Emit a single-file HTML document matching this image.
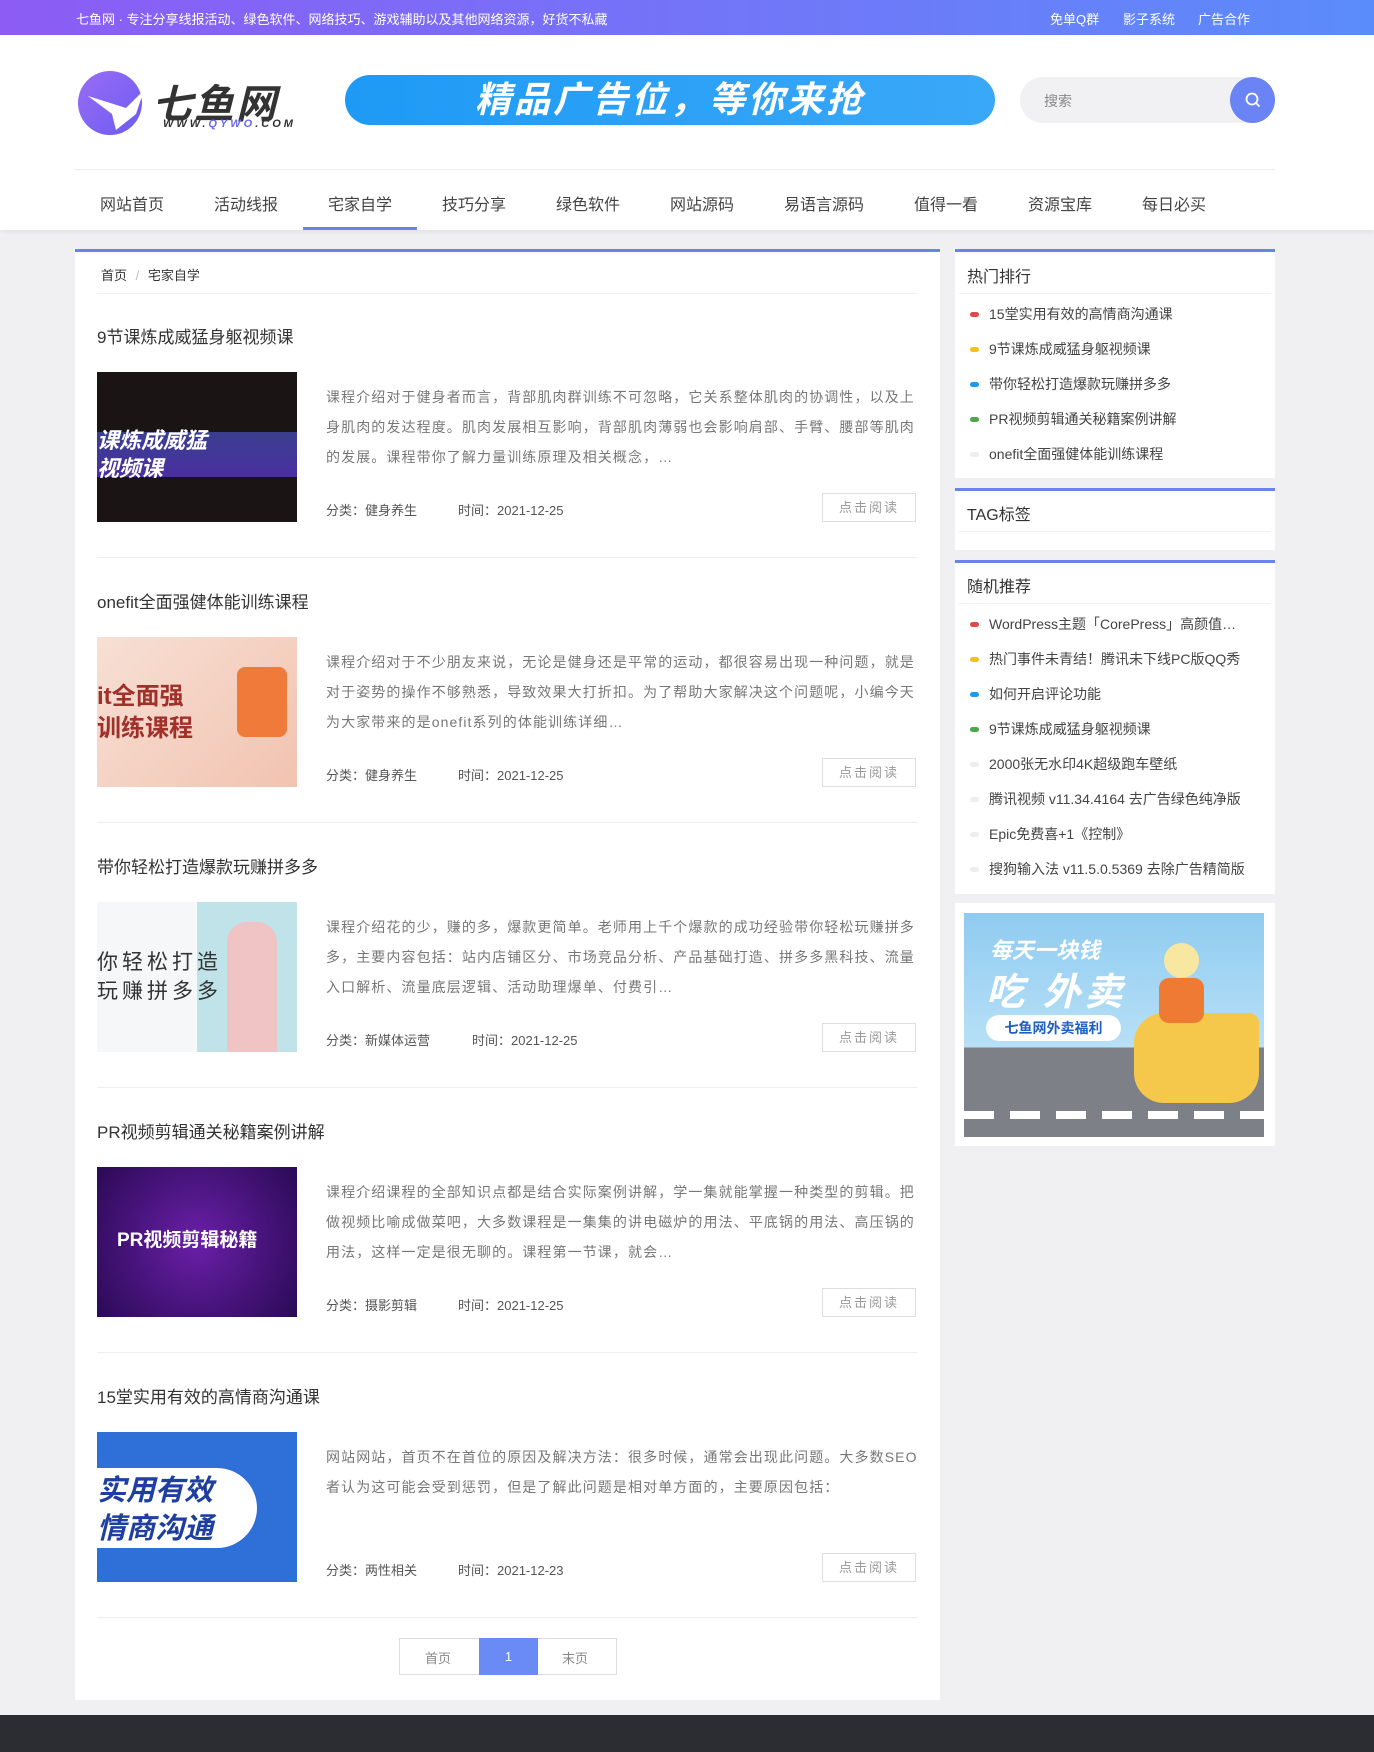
<!DOCTYPE html>
<html><head><meta charset="utf-8"><style>
*{margin:0;padding:0;box-sizing:border-box}
body{width:1374px;height:1752px;background:#f0f0f2;font-family:"Liberation Sans","Noto Sans CJK SC",sans-serif;position:relative;overflow:hidden;color:#333}
.a{position:absolute}
.top{left:0;top:0;width:1374px;height:35px;background:linear-gradient(90deg,#8c5cf5,#5b8cfb);color:#fff;font-size:13px}
.hdr{left:0;top:35px;width:1374px;height:195px;background:#fff;box-shadow:0 2px 4px rgba(0,0,0,.06)}
.nav span{position:absolute;top:191px;font-size:16px;color:#444}
.box{background:#fff}
.bar{border-top:3px solid #6a83e6}
.title{font-size:17px;color:#333}
.desc{font-size:14px;color:#777;line-height:30px;width:596px;letter-spacing:1.1px}
.meta{font-size:13px;color:#555}
.meta b{font-weight:normal;display:inline-block;width:132px}
.btn{width:94px;height:29px;border:1px solid #ddd;color:#999;font-size:13px;text-align:center;line-height:27px;letter-spacing:2px}
.sep{height:1px;background:#eee;width:820px;left:97px}
.li{font-size:14px;color:#444;left:989px}
.dot{width:9px;height:5px;border-radius:3px;left:970px}
</style></head><body>
<div class="a top"><span class="a" style="left:76px;top:9px">七鱼网 · 专注分享线报活动、绿色软件、网络技巧、游戏辅助以及其他网络资源，好货不私藏</span>
<span class="a" style="left:1050px;top:9px">免单Q群</span><span class="a" style="left:1123px;top:9px">影子系统</span><span class="a" style="left:1198px;top:9px">广告合作</span></div>
<div class="a hdr"></div>
<div class="a" style="left:78px;top:71px;width:64px;height:64px;border-radius:50%;background:linear-gradient(135deg,#9a6cf6,#6b5cf0)"></div>
<svg class="a" style="left:86px;top:84px" width="60" height="50" viewBox="0 0 60 50"><path d="M2 12 L40 24 L58 6 L50 30 L30 46 L26 30 Z" fill="#fff"/></svg>
<div class="a" style="left:152px;top:72px;font-size:40px;font-weight:bold;color:#333;letter-spacing:2px;font-style:italic">七鱼网</div>
<div class="a" style="left:163px;top:118px;font-size:11px;font-weight:bold;letter-spacing:3px;color:#333;font-style:italic">WWW.<span style="color:#6a6cf0">QYWO</span>.COM</div>
<div class="a" style="left:345px;top:75px;width:650px;height:50px;border-radius:25px;background:linear-gradient(90deg,#1e9af5,#3aa8f8);color:#fff;font-size:36px;font-weight:bold;font-style:italic;text-align:center;line-height:50px;letter-spacing:3px">精品广告位，等你来抢</div>
<div class="a" style="left:1020px;top:77px;width:255px;height:46px;border-radius:23px;background:#f1f1f3"></div>
<div class="a" style="left:1044px;top:91px;font-size:14px;color:#888">搜索</div>
<div class="a" style="left:1230px;top:77px;width:45px;height:46px;border-radius:50%;background:#6a83f5"></div>
<svg class="a" style="left:1243px;top:90px" width="20" height="20" viewBox="0 0 20 20"><circle cx="9" cy="9" r="5.5" fill="none" stroke="#fff" stroke-width="1.8"/><path d="M13 13l3.5 3.5" stroke="#fff" stroke-width="1.8"/></svg>
<div class="a" style="left:75px;top:169px;width:1200px;height:1px;background:#eee"></div>
<div class="nav"><span style="left:100px">网站首页</span><span style="left:214px">活动线报</span><span style="left:328px">宅家自学</span><span style="left:442px">技巧分享</span><span style="left:556px">绿色软件</span><span style="left:670px">网站源码</span><span style="left:784px">易语言源码</span><span style="left:914px">值得一看</span><span style="left:1028px">资源宝库</span><span style="left:1142px">每日必买</span></div>
<div class="a" style="left:303px;top:227px;width:114px;height:3px;background:#6a83e6"></div>

<div class="a box bar" style="left:75px;top:249px;width:865px;height:1451px"></div>
<div class="a" style="left:101px;top:265px;font-size:13px;color:#333">首页 <span style="color:#bbb;margin:0 5px">/</span> 宅家自学</div>
<div class="a" style="left:97px;top:293px;width:820px;height:1px;background:#f0f0f0"></div>

<div class="a title" style="left:97px;top:323px">9节课炼成威猛身躯视频课</div>
<div class="a" style="left:97px;top:372px;width:200px;height:150px;background:linear-gradient(180deg,#1a1414 0,#1a1414 40%,#3a3f8f 40%,#4a2fa0 70%,#1a1414 70%)"><div style="position:absolute;left:0;top:55px;color:#fff;font-size:22px;font-weight:bold;font-style:italic;line-height:28px">课炼成威猛<br>视频课</div></div>
<div class="a desc" style="left:326px;top:382px">课程介绍对于健身者而言，背部肌肉群训练不可忽略，它关系整体肌肉的协调性，以及上身肌肉的发达程度。肌肉发展相互影响，背部肌肉薄弱也会影响肩部、手臂、腰部等肌肉的发展。课程带你了解力量训练原理及相关概念，…</div>
<div class="a meta" style="left:326px;top:500px"><b>分类：健身养生</b>时间：2021-12-25</div>
<div class="a btn" style="left:822px;top:493px">点击阅读</div>
<div class="a sep" style="top:557px"></div>

<div class="a title" style="left:97px;top:588px">onefit全面强健体能训练课程</div>
<div class="a" style="left:97px;top:637px;width:200px;height:150px;background:linear-gradient(135deg,#f7e0d5,#f2c3b0)"><div style="position:absolute;left:0;top:44px;color:#a0302a;font-size:24px;font-weight:bold;line-height:32px">it全面强<br>训练课程</div><div style="position:absolute;left:140px;top:30px;width:50px;height:70px;background:#f07a3a;border-radius:8px"></div></div>
<div class="a desc" style="left:326px;top:647px">课程介绍对于不少朋友来说，无论是健身还是平常的运动，都很容易出现一种问题，就是对于姿势的操作不够熟悉，导致效果大打折扣。为了帮助大家解决这个问题呢，小编今天为大家带来的是onefit系列的体能训练详细…</div>
<div class="a meta" style="left:326px;top:765px"><b>分类：健身养生</b>时间：2021-12-25</div>
<div class="a btn" style="left:822px;top:758px">点击阅读</div>
<div class="a sep" style="top:822px"></div>

<div class="a title" style="left:97px;top:853px">带你轻松打造爆款玩赚拼多多</div>
<div class="a" style="left:97px;top:902px;width:200px;height:150px;background:linear-gradient(90deg,#f5f7f8 50%,#bfe3e8 50%)"><div style="position:absolute;left:0;top:46px;color:#333;font-size:21px;line-height:29px;letter-spacing:4px">你轻松打造<br>玩赚拼多多</div><div style="position:absolute;left:130px;top:20px;width:50px;height:130px;background:#f0c4c4;border-radius:20px 20px 0 0"></div></div>
<div class="a desc" style="left:326px;top:912px">课程介绍花的少，赚的多，爆款更简单。老师用上千个爆款的成功经验带你轻松玩赚拼多多，主要内容包括：站内店铺区分、市场竞品分析、产品基础打造、拼多多黑科技、流量入口解析、流量底层逻辑、活动助理爆单、付费引…</div>
<div class="a meta" style="left:326px;top:1030px"><b style="width:146px">分类：新媒体运营</b>时间：2021-12-25</div>
<div class="a btn" style="left:822px;top:1023px">点击阅读</div>
<div class="a sep" style="top:1087px"></div>

<div class="a title" style="left:97px;top:1118px">PR视频剪辑通关秘籍案例讲解</div>
<div class="a" style="left:97px;top:1167px;width:200px;height:150px;background:radial-gradient(circle at 50% 50%,#6a1fa8,#2a0a55)"><div style="position:absolute;left:20px;top:58px;color:#fff;font-size:19px;font-weight:bold">PR视频剪辑秘籍</div></div>
<div class="a desc" style="left:326px;top:1177px">课程介绍课程的全部知识点都是结合实际案例讲解，学一集就能掌握一种类型的剪辑。把做视频比喻成做菜吧，大多数课程是一集集的讲电磁炉的用法、平底锅的用法、高压锅的用法，这样一定是很无聊的。课程第一节课，就会…</div>
<div class="a meta" style="left:326px;top:1295px"><b>分类：摄影剪辑</b>时间：2021-12-25</div>
<div class="a btn" style="left:822px;top:1288px">点击阅读</div>
<div class="a sep" style="top:1352px"></div>

<div class="a title" style="left:97px;top:1383px">15堂实用有效的高情商沟通课</div>
<div class="a" style="left:97px;top:1432px;width:200px;height:150px;background:#2e6fd8"><div style="position:absolute;left:0;top:36px;width:160px;height:80px;background:#fff;border-radius:0 40px 40px 0"></div><div style="position:absolute;left:0;top:40px;color:#1f3fa0;font-size:29px;font-weight:bold;font-style:italic;line-height:38px">实用有效<br>情商沟通</div></div>
<div class="a desc" style="left:326px;top:1442px">网站网站，首页不在首位的原因及解决方法：很多时候，通常会出现此问题。大多数SEO者认为这可能会受到惩罚，但是了解此问题是相对单方面的，主要原因包括：</div>
<div class="a meta" style="left:326px;top:1560px"><b>分类：两性相关</b>时间：2021-12-23</div>
<div class="a btn" style="left:822px;top:1553px">点击阅读</div>
<div class="a sep" style="top:1617px"></div>

<div class="a" style="left:399px;top:1638px;width:218px;height:37px;border:1px solid #ddd;font-size:13px;color:#888">
<span class="a" style="left:25px;top:9px">首页</span>
<span class="a" style="left:79px;top:-1px;width:59px;height:37px;background:#6a8af5;color:#fff;text-align:center;line-height:37px">1</span>
<span class="a" style="left:162px;top:9px">末页</span></div>

<div class="a box bar" style="left:955px;top:249px;width:320px;height:229px"></div>
<div class="a" style="left:967px;top:263px;font-size:16px;color:#333">热门排行</div>
<div class="a" style="left:959px;top:293px;width:312px;height:1px;background:#f0f0f0"></div>
<div class="a dot" style="top:312px;background:#e0484f"></div><div class="a li" style="top:304px">15堂实用有效的高情商沟通课</div>
<div class="a dot" style="top:347px;background:#f2c21a"></div><div class="a li" style="top:339px">9节课炼成威猛身躯视频课</div>
<div class="a dot" style="top:382px;background:#1a9af0"></div><div class="a li" style="top:374px">带你轻松打造爆款玩赚拼多多</div>
<div class="a dot" style="top:417px;background:#4aa74a"></div><div class="a li" style="top:409px">PR视频剪辑通关秘籍案例讲解</div>
<div class="a dot" style="top:452px;background:#eee"></div><div class="a li" style="top:444px">onefit全面强健体能训练课程</div>

<div class="a box bar" style="left:955px;top:488px;width:320px;height:62px"></div>
<div class="a" style="left:967px;top:501px;font-size:16px;color:#333">TAG标签</div>
<div class="a" style="left:959px;top:531px;width:312px;height:1px;background:#f0f0f0"></div>

<div class="a box bar" style="left:955px;top:560px;width:320px;height:334px"></div>
<div class="a" style="left:967px;top:573px;font-size:16px;color:#333">随机推荐</div>
<div class="a" style="left:959px;top:603px;width:312px;height:1px;background:#f0f0f0"></div>
<div class="a dot" style="top:622px;background:#e0484f"></div><div class="a li" style="top:614px">WordPress主题「CorePress」高颜值…</div>
<div class="a dot" style="top:657px;background:#f2c21a"></div><div class="a li" style="top:649px">热门事件未青结！腾讯未下线PC版QQ秀</div>
<div class="a dot" style="top:692px;background:#1a9af0"></div><div class="a li" style="top:684px">如何开启评论功能</div>
<div class="a dot" style="top:727px;background:#4aa74a"></div><div class="a li" style="top:719px">9节课炼成威猛身躯视频课</div>
<div class="a dot" style="top:762px;background:#eee"></div><div class="a li" style="top:754px">2000张无水印4K超级跑车壁纸</div>
<div class="a dot" style="top:797px;background:#eee"></div><div class="a li" style="top:789px">腾讯视频 v11.34.4164 去广告绿色纯净版</div>
<div class="a dot" style="top:832px;background:#eee"></div><div class="a li" style="top:824px">Epic免费喜+1《控制》</div>
<div class="a dot" style="top:867px;background:#eee"></div><div class="a li" style="top:859px">搜狗输入法 v11.5.0.5369 去除广告精简版</div>

<div class="a box" style="left:955px;top:903px;width:320px;height:243px"></div>
<div class="a" style="left:964px;top:913px;width:300px;height:224px;background:linear-gradient(180deg,#8fcbf0 0,#b8e0f7 60%,#7d8087 60%,#7d8087 100%)">
<div style="position:absolute;left:26px;top:20px;color:#fff;font-size:22px;font-weight:bold;font-style:italic">每天一块钱</div>
<div style="position:absolute;left:22px;top:48px;color:#fff;font-size:38px;font-weight:bold;font-style:italic;letter-spacing:4px">吃 外卖</div>
<div style="position:absolute;left:22px;top:102px;width:135px;height:26px;border-radius:13px;background:#fff;color:#1f5fc0;font-size:14px;font-weight:bold;text-align:center;line-height:26px">七鱼网外卖福利</div>
<div style="position:absolute;left:0;top:198px;width:300px;height:8px;background:repeating-linear-gradient(90deg,#fff 0,#fff 30px,transparent 30px,transparent 46px)"></div>
<div style="position:absolute;left:170px;top:100px;width:125px;height:90px;border-radius:30px 10px 30px 30px;background:#f5c84c"></div>
<div style="position:absolute;left:200px;top:30px;width:35px;height:35px;border-radius:50%;background:#f7e7a0"></div>
<div style="position:absolute;left:195px;top:65px;width:45px;height:45px;border-radius:10px;background:#ef7a33"></div>
</div>

<div class="a" style="left:0;top:1715px;width:1374px;height:37px;background:#2c2d33"></div>
</body></html>
